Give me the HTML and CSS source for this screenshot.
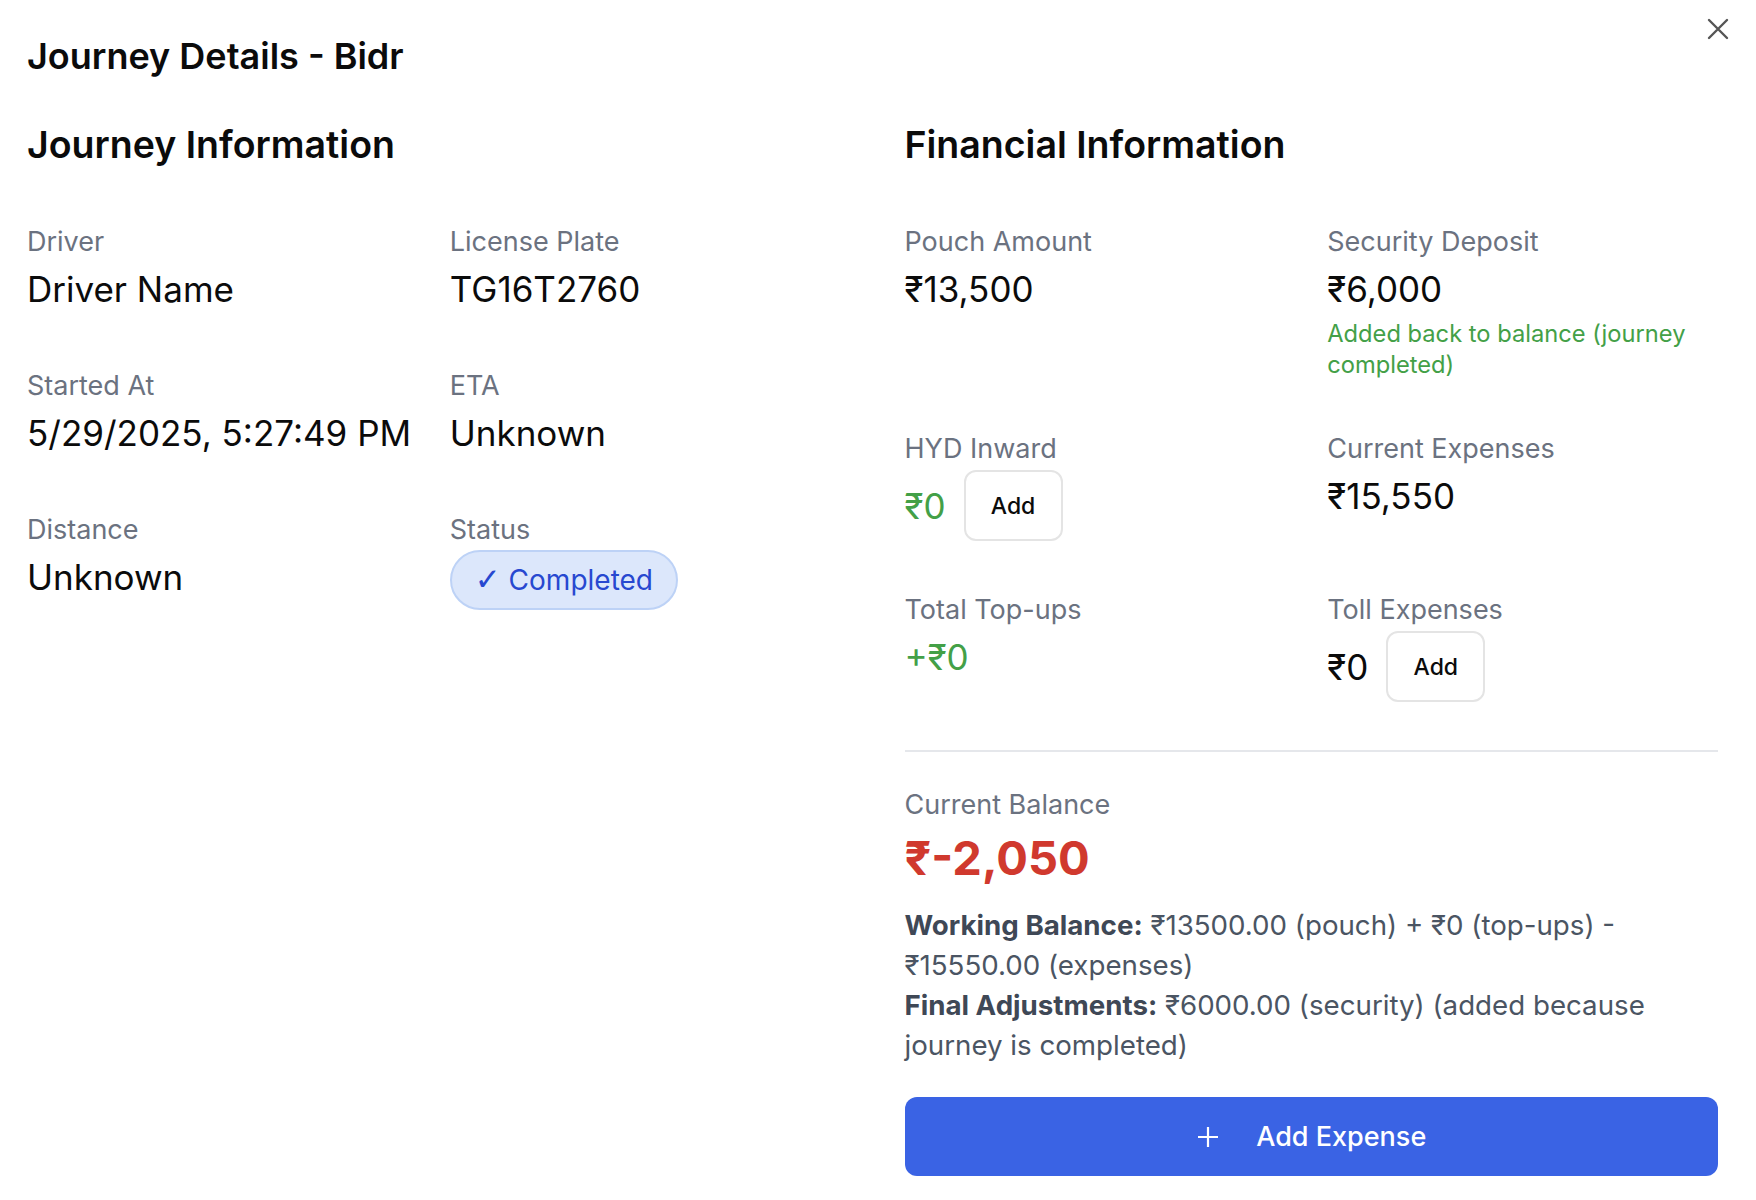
FILE: index.html
```html
<!DOCTYPE html>
<html lang="en">
<head>
<meta charset="utf-8">
<title>Journey Details - Bidr</title>
<link rel="stylesheet" href="styles.css">
</head>
<body>
<div class="modal">
  <button class="close" aria-label="Close">
    <svg width="22" height="22" viewBox="0 0 22 22"><path d="M2 2L20 20M20 2L2 20" stroke="#555" stroke-width="2.4" stroke-linecap="round" fill="none"/></svg>
  </button>
  <h1 class="title">Journey Details - Bidr</h1>
  <div class="columns">
    <section class="section">
      <h2 class="heading">Journey Information</h2>
      <div class="grid grid-left">
        <div class="cell"><div class="label">Driver</div><div class="value">Driver Name</div></div>
        <div class="cell"><div class="label">License Plate</div><div class="value">TG16T2760</div></div>
        <div class="cell"><div class="label">Started At</div><div class="value">5/29/2025, 5:27:49 PM</div></div>
        <div class="cell"><div class="label">ETA</div><div class="value">Unknown</div></div>
        <div class="cell"><div class="label">Distance</div><div class="value">Unknown</div></div>
        <div class="cell"><div class="label">Status</div><div class="pill"><span class="check">✓</span> Completed</div></div>
      </div>
    </section>
    <section class="section">
      <h2 class="heading">Financial Information</h2>
      <div class="grid grid-fin">
        <div class="cell"><div class="label">Pouch Amount</div><div class="value">₹13,500</div></div>
        <div class="cell"><div class="label">Security Deposit</div><div class="value">₹6,000</div><div class="note">Added back to balance (journey completed)</div></div>
        <div class="cell"><div class="label">HYD Inward</div><div class="value-row"><span class="value green">₹0</span><button class="add">Add</button></div></div>
        <div class="cell"><div class="label">Current Expenses</div><div class="value">₹15,550</div></div>
        <div class="cell"><div class="label">Total Top-ups</div><div class="value green">+₹0</div></div>
        <div class="cell"><div class="label">Toll Expenses</div><div class="value-row"><span class="value">₹0</span><button class="add">Add</button></div></div>
      </div>
      <div class="balance">
        <div class="label">Current Balance</div>
        <div class="balance-value">₹-2,050</div>
        <p class="breakdown"><strong>Working Balance:</strong> ₹13500.00 (pouch) + ₹0 (top-ups) - ₹15550.00 (expenses)<br><strong>Final Adjustments:</strong> ₹6000.00 (security) (added because journey is completed)</p>
        <button class="primary"><svg class="plus" width="24" height="24" viewBox="0 0 24 24"><path d="M12 2V22M2 12H22" stroke="#fff" stroke-width="2.2" fill="none"/></svg><span>Add Expense</span></button>
      </div>
    </section>
  </div>
</div>
</body>
</html>
```
FILE: styles.css
```css
* { box-sizing: border-box; }
html, body { margin: 0; padding: 0; background: #fff; }
body {
  font-family: Inter, "Noto Sans", "Liberation Sans", sans-serif;
  color: #0b0b0b;
}
.modal {
  position: relative;
  padding: 34px 38px 0 27px;
}
.close {
  position: absolute;
  top: 18px;
  right: 27px;
  width: 22px;
  height: 22px;
  padding: 0;
  border: 0;
  background: none;
  cursor: pointer;
}
.close svg { display: block; }
.title {
  margin: 0;
  font-size: 36px;
  line-height: 44px;
  font-weight: 600;
}
.columns {
  display: grid;
  grid-template-columns: 1fr 1fr;
  column-gap: 64px;
  margin-top: 45px;
}
.heading {
  margin: 0;
  font-size: 37.5px;
  line-height: 44px;
  font-weight: 600;
}
.grid {
  display: grid;
  grid-template-columns: 1fr 1fr;
  column-gap: 32px;
  margin-top: 57px;
}
.grid-left { row-gap: 57px; }
.grid-fin { row-gap: 51px; }
.label {
  font-size: 27px;
  line-height: 36px;
  color: #6b7280;
}
.value {
  margin-top: 7px;
  font-size: 35px;
  line-height: 44px;
  color: #0b0b0b;
}
.green { color: #43a047; }
.note {
  margin-top: 7px;
  font-size: 23.7px;
  line-height: 31px;
  color: #43a047;
}
.value-row {
  display: flex;
  align-items: center;
  gap: 18px;
  margin-top: 3px;
}
.value-row .value { margin-top: 0; }
.add {
  width: 99px;
  height: 71px;
  border: 2px solid #e4e4e4;
  border-radius: 12px;
  background: #fff;
  font-family: inherit;
  font-size: 23px;
  font-weight: 500;
  color: #0b0b0b;
  padding: 0;
}
.pill {
  display: inline-block;
  margin-top: 2px;
  padding: 0 23px;
  height: 60px;
  line-height: 56px;
  border: 2px solid #bdd2f6;
  border-radius: 30px;
  background: #dce7fb;
  color: #2748d0;
  font-size: 28px;
}
.check {
  font-family: "DejaVu Sans", sans-serif;
  font-size: 31px;
  line-height: 1;
}
.balance {
  margin-top: 48px;
  border-top: 2px solid #e5e7eb;
  padding-top: 35px;
}
.balance-value {
  margin-top: 7px;
  font-size: 47px;
  line-height: 56px;
  font-weight: 700;
  color: #d0392e;
}
.breakdown {
  margin: 19px 0 0;
  font-size: 27.7px;
  line-height: 40px;
  color: #4b5563;
}
.breakdown strong { font-weight: 700; color: #3f4856; }
.primary {
  display: flex;
  align-items: center;
  justify-content: center;
  width: 100%;
  height: 79px;
  margin-top: 32px;
  border: 0;
  border-radius: 12px;
  background: #3a63e4;
  color: #fff;
  font-family: inherit;
  font-size: 27px;
  font-weight: 500;
}
.plus { margin-right: 36px; }
```
